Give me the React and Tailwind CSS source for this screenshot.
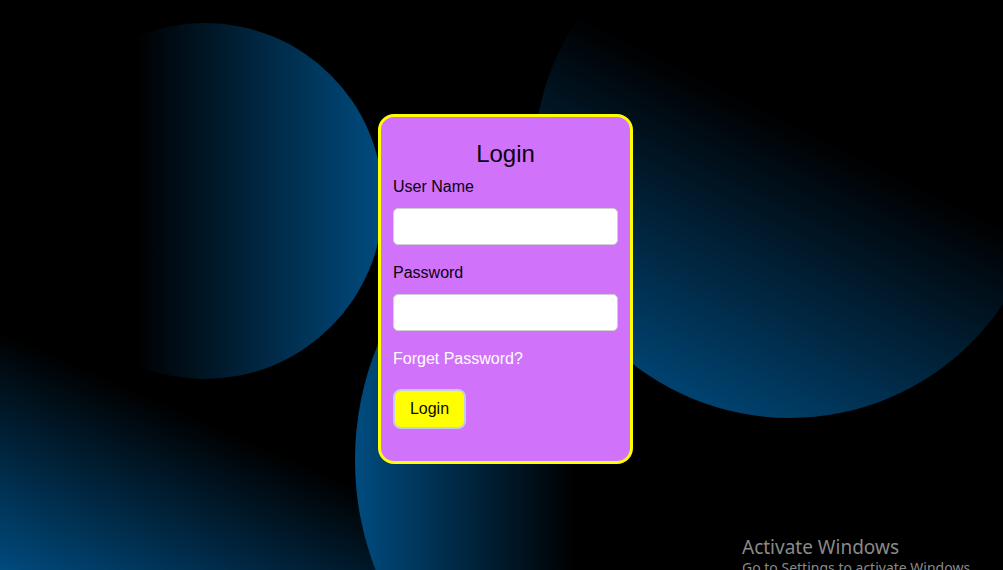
import React from "react";

function Background() {
  return (
    <svg
      className="absolute inset-0"
      width="1003"
      height="570"
      viewBox="0 0 1003 570"
      xmlns="http://www.w3.org/2000/svg"
    >
      <defs>
        <linearGradient id="gBL" gradientUnits="userSpaceOnUse" x1="0" y1="575" x2="90" y2="370">
          <stop offset="0" stopColor="#004c80" />
          <stop offset="1" stopColor="#000000" />
        </linearGradient>
        <linearGradient id="gTL" gradientUnits="userSpaceOnUse" x1="135" y1="0" x2="383" y2="0">
          <stop offset="0" stopColor="#000000" />
          <stop offset="1" stopColor="#004c80" />
        </linearGradient>
        <linearGradient id="gMid" gradientUnits="userSpaceOnUse" x1="355" y1="0" x2="575" y2="0">
          <stop offset="0" stopColor="#004c80" />
          <stop offset="1" stopColor="#000000" />
        </linearGradient>
        <linearGradient id="gTR" gradientUnits="userSpaceOnUse" x1="600" y1="400" x2="750" y2="100">
          <stop offset="0" stopColor="#004c80" />
          <stop offset="1" stopColor="#000000" />
        </linearGradient>
      </defs>
      <rect width="1003" height="570" fill="#000" />
      <circle cx="150" cy="700" r="450" fill="url(#gBL)" />
      <circle cx="205" cy="201" r="178" fill="url(#gTL)" />
      <circle cx="659" cy="460" r="304" fill="url(#gMid)" />
      <circle cx="790" cy="162" r="256" fill="url(#gTR)" />
    </svg>
  );
}

export default function App() {
  return (
    <div className="relative w-full h-[570px] overflow-hidden bg-black font-['Liberation_Sans',Arial,sans-serif]">
      <Background />
      <div className="relative z-10 flex justify-center pt-[114px]">
        <form
          className="ml-[8px] w-[255px] rounded-[16px] border-[3px] border-[#ffff00] bg-[#d172fb] px-[12px] pt-[23px] pb-[32px] flex flex-col items-start"
          onSubmit={(e) => e.preventDefault()}
        >
          <h1 className="w-full text-center text-[24px] leading-[28px] text-[#0a0010] font-normal">
            Login
          </h1>
          <label className="mt-[10px] text-[16px] leading-[18px] text-[#0a0010]">User Name</label>
          <input
            type="text"
            className="mt-[12px] w-full h-[37px] rounded-[5px] border border-[#cfcfd4] bg-white px-2 outline-none"
          />
          <label className="mt-[19px] text-[16px] leading-[18px] text-[#0a0010]">Password</label>
          <input
            type="password"
            className="mt-[12px] w-full h-[37px] rounded-[5px] border border-[#cfcfd4] bg-white px-2 outline-none"
          />
          <a href="#" className="mt-[19px] text-[16px] leading-[18px] text-white">
            Forget Password?
          </a>
          <button
            type="submit"
            className="mt-[21px] w-[73px] h-[40px] rounded-[8px] border-2 border-[#c5cde0] bg-[#ffff00] text-[16px] leading-[18px] text-[#0a0a00]"
          >
            Login
          </button>
        </form>
      </div>
      <div className="absolute left-[742px] top-[535px] z-20 font-['Noto_Sans',sans-serif] text-[#8a8a8a] whitespace-nowrap">
        <div className="text-[19px] leading-[24px]">Activate Windows</div>
        <div className="text-[14px] leading-[18px]">Go to Settings to activate Windows.</div>
      </div>
    </div>
  );
}
